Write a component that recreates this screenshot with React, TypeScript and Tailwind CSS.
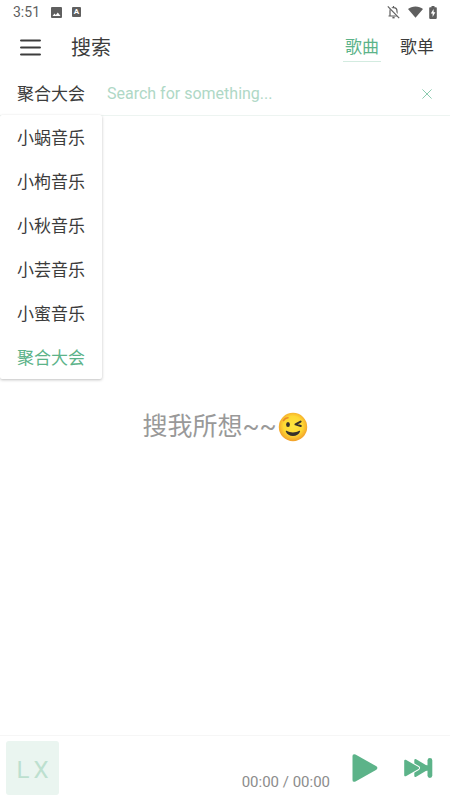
import { useState } from "react";

const sources = ["小蜗音乐", "小枸音乐", "小秋音乐", "小芸音乐", "小蜜音乐", "聚合大会"];
const tabs = ["歌曲", "歌单"];

function StatusBar() {
  return (
    <div className="flex h-6 items-center justify-between pl-[13px] pr-3 text-[#5f5f5f]">
      <div className="flex items-center">
        <span className="w-[38px] text-sm leading-6">3:51</span>
        <svg className="h-[11px] w-[11px]" viewBox="0 0 11 11" aria-hidden="true">
          <path
            fill="currentColor"
            fillRule="evenodd"
            d="M1 0h9a1 1 0 0 1 1 1v9a1 1 0 0 1-1 1H1a1 1 0 0 1-1-1V1a1 1 0 0 1 1-1ZM1.5 9h8L6.8 5.4 4.8 8 3.5 6.4Z"
          />
        </svg>
        <span className="ml-[10px] flex h-[10px] w-[9px] items-center justify-center rounded-[1px] bg-[#5f5f5f] text-[8px] font-bold leading-none text-white">
          A
        </span>
      </div>
      <div className="flex items-center">
        <svg className="h-[14px] w-[13px]" viewBox="0 0 13 14" fill="none" stroke="currentColor" aria-hidden="true">
          <path strokeWidth="1.2" d="M1.5 11h9.5M3 11V6.2C3 3.8 4.4 2.6 6.5 2.6S10 3.8 10 6.2V11M6.5 2.6V1" />
          <path strokeWidth="1.6" d="M5.4 12.6h2.2" />
          <path stroke="#fff" strokeWidth="2.6" d="M1.6 1.2l11 11.4" />
          <path strokeWidth="1.2" d="M.8 1.4l11.4 11.8" />
        </svg>
        <svg className="ml-2 h-[12px] w-[15px]" viewBox="0 0 15 12" aria-hidden="true">
          <path fill="currentColor" d="M7.5 11.8 0 3C2 1.3 4.5.4 7.5.4S13 1.3 15 3Z" />
        </svg>
        <svg className="ml-[6px] mr-[1px] h-[13px] w-[8px]" viewBox="0 0 8 13" aria-hidden="true">
          <path fill="currentColor" d="M2.5 0h3v1.3H7a.8.8 0 0 1 .8.8v10a.8.8 0 0 1-.8.8H1a.8.8 0 0 1-.8-.8v-10a.8.8 0 0 1 .8-.8h1.5Z" />
          <path fill="#fff" d="M4.6 3 1.8 7.5h1.8V11l2.8-4.7H4.6Z" />
        </svg>
      </div>
    </div>
  );
}

function WinkFace() {
  return (
    <svg className="ml-px h-[30px] w-[30px]" viewBox="0 0 30 30" role="img" aria-label="wink">
      <defs>
        <radialGradient id="face" cx="50%" cy="46%" r="52%">
          <stop offset="0" stopColor="#fee53f" />
          <stop offset=".65" stopColor="#fed733" />
          <stop offset="1" stopColor="#f3a42b" />
        </radialGradient>
      </defs>
      <circle cx="15" cy="15" r="14.2" fill="url(#face)" />
      <path d="M5.5 8.5C6.6 6.7 8 5.9 10 5.8" fill="none" stroke="#e88a2a" strokeWidth="1.6" strokeLinecap="round" />
      <ellipse cx="10" cy="12.5" rx="1.9" ry="2.5" fill="#36302b" />
      <path d="M22.6 9.6 17.5 12.4 22.8 14" fill="none" stroke="#36302b" strokeWidth="2" strokeLinecap="round" strokeLinejoin="round" />
      <path d="M8.6 18.8c3.8 2.2 8.8 2.2 12.7 0 .6-.3 1 .1.8.8-1.2 3-3.7 4.4-7.1 4.4s-6-1.4-7.2-4.4c-.3-.7.1-1.1.8-.8Z" fill="#36302b" />
    </svg>
  );
}

export default function App() {
  const [source, setSource] = useState("聚合大会");
  const [open, setOpen] = useState(true);
  const [tab, setTab] = useState("歌曲");
  const [query, setQuery] = useState("");

  return (
    <div className="flex min-h-screen flex-col bg-white font-[Roboto,'Noto_Sans_CJK_SC',sans-serif] text-[#3c3c3c]">
      <StatusBar />

      <header className="flex h-12 items-center pl-5 pr-[14px]">
        <button type="button" aria-label="菜单" className="flex h-8 items-center">
          <svg className="h-[18px] w-[21px]" viewBox="0 0 21 18" stroke="currentColor" strokeWidth="2.2" strokeLinecap="round" aria-hidden="true">
            <path d="M1.1 1.5h18.8M1.1 8.5h18.8M1.1 15.5h18.8" />
          </svg>
        </button>
        <h1 className="ml-[30px] text-xl leading-8">搜索</h1>
        <nav className="ml-auto flex gap-[17px]">
          {tabs.map((name) => (
            <button
              key={name}
              type="button"
              onClick={() => setTab(name)}
              className={`h-7 border-b px-[2px] pb-[2px] text-[17px] leading-6 ${
                tab === name ? "border-[#d3ebe0] text-[#5cb389]" : "border-transparent"
              }`}
            >
              {name}
            </button>
          ))}
        </nav>
      </header>

      <div className="relative flex h-11 items-center border-b border-[#edf4f1]">
        <button
          type="button"
          aria-expanded={open}
          onClick={() => setOpen(!open)}
          className="h-full px-[17px] text-[17px] leading-6"
        >
          {source}
        </button>
        <input
          type="text"
          aria-label="搜索"
          value={query}
          onChange={(e) => setQuery(e.target.value)}
          placeholder="Search for something..."
          className="ml-[5px] h-full min-w-0 flex-1 bg-transparent text-base outline-none placeholder:text-[#afd8c6]"
        />
        <button type="button" aria-label="清除" onClick={() => setQuery("")} className="flex h-full items-center px-[18px] text-[#8ccbb0]">
          <svg className="h-[10px] w-[10px]" viewBox="0 0 10 10" stroke="currentColor" strokeWidth="1" strokeLinecap="round" aria-hidden="true">
            <path d="M.7.7 9.3 9.3M9.3.7.7 9.3" />
          </svg>
        </button>
        {open && (
          <ul className="absolute left-0 top-full rounded-[2px] bg-white shadow-[0_1px_3px_rgba(0,0,0,0.25)]">
            {sources.map((name) => (
              <li key={name}>
                <button
                  type="button"
                  onClick={() => {
                    setSource(name);
                    setOpen(false);
                  }}
                  className={`h-11 px-[17px] pt-px text-[17px] leading-6 ${name === source ? "text-[#5cb389]" : ""}`}
                >
                  {name}
                </button>
              </li>
            ))}
          </ul>
        )}
      </div>

      <main className="flex flex-1 items-center justify-center text-[#999]">
        <p className="flex items-center pt-[2px] text-[25px] leading-9">
          搜我所想~~
          <WinkFace />
        </p>
      </main>

      <footer className="flex h-[65px] items-center border-t border-[#f6f6f6] pl-[6px] pr-[17px]">
        <div className="flex h-[54px] w-[53px] items-center justify-center gap-1 rounded-[3px] bg-[#eaf5f0] pt-1 text-2xl text-[#bde0cf]">
          <span>L</span>
          <span>X</span>
        </div>
        <span className="ml-auto self-end pb-2 text-[15px] leading-5 text-[#8c8c8c]">00:00 / 00:00</span>
        <button type="button" aria-label="播放" className="ml-[22px] text-[#5cb389]">
          <svg className="h-[28px] w-[26px]" viewBox="0 0 26 28" fill="currentColor" aria-hidden="true">
            <path d="M3.5.4 24.4 12.3q2 1.7 0 3.4L3.5 27.6Q.5 28.5.5 26V2Q.5-.5 3.5.4Z" />
          </svg>
        </button>
        <button type="button" aria-label="下一首" className="ml-[26px] text-[#5cb389]">
          <svg className="h-[20px] w-[29px]" viewBox="0 0 29 20" strokeLinejoin="round" aria-hidden="true">
            <g fill="currentColor">
              <path stroke="currentColor" strokeWidth="2.4" d="M11.5 2.2 24.5 10 11.5 17.8Z" />
              <path d="M20 7.5 24 7.2v5.6l-4-.3Z" />
              <rect x="23.5" y="0" width="4.8" height="20" rx="2.4" />
            </g>
            <path fill="#fff" stroke="#fff" strokeWidth="4.4" d="M2 3.2 13.8 10 2 16.8Z" />
            <path fill="currentColor" stroke="currentColor" strokeWidth="2.2" d="M1.3 2.8 14 10 1.3 17.2Z" />
          </svg>
        </button>
      </footer>
    </div>
  );
}
